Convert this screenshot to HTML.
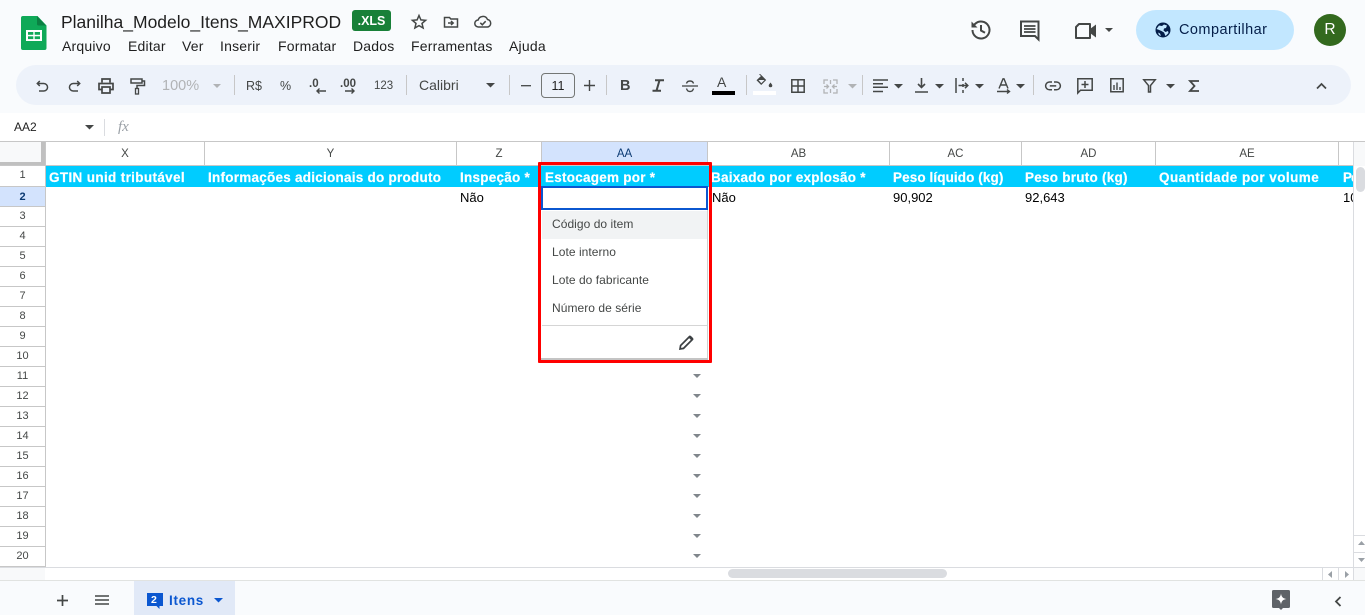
<!DOCTYPE html>
<html lang="pt"><head><meta charset="utf-8"><title>Planilha</title>
<style>
html,body{margin:0;padding:0;width:1365px;height:615px;overflow:hidden;background:#fff;font-family:"Liberation Sans",sans-serif;color:#1f1f1f}
.a{position:absolute}
.t{position:absolute;white-space:nowrap}
svg{position:absolute;overflow:visible}
.m{position:absolute;top:38px;font-size:14px;letter-spacing:.2px;line-height:16px;color:#1f1f1f;white-space:nowrap}
.tb{position:absolute;top:77px;font-size:12px;line-height:16px;color:#444746;white-space:nowrap}
.s{fill:none;stroke:#444746;stroke-width:1.5}
.f{fill:#444746}
.sep{position:absolute;top:75px;width:1px;height:20px;background:#c7c7c7}
.ch{position:absolute;top:142px;height:23px;line-height:25px;font-size:11.5px;text-align:center;color:#444746;border-right:1px solid #c7c7c7;box-sizing:content-box}
.rh{position:absolute;left:0;width:45px;text-align:center;font-size:11px;color:#444746;border-bottom:1px solid #c7c7c7;box-sizing:border-box;line-height:19px;height:20px}
.hd{position:absolute;top:169px;font-size:13.5px;line-height:18px;font-weight:bold;color:#fff;white-space:nowrap;letter-spacing:.25px;-webkit-text-stroke:.2px #fff}
.c{position:absolute;top:190px;font-size:13px;line-height:16px;color:#000;white-space:nowrap}
.o{position:absolute;left:552px;font-size:12px;letter-spacing:.05px;line-height:16px;color:#444746;white-space:nowrap}
.arr{position:absolute;left:693px;width:0;height:0;border-left:4px solid transparent;border-right:4px solid transparent;border-top:4px solid #80868b}
</style></head><body>
<div class="a" style="left:0;top:0;width:1365px;height:141px;background:#f9fbfd"></div>

<!-- logo -->
<svg style="left:21px;top:16px" width="26" height="34" viewBox="0 0 26 34"><path d="M2 0h14.500l9 9.500v22.500a2 2 0 0 1-2 2H2a2 2 0 0 1-2-2V2a2 2 0 0 1 2-2z" fill="#0fa958"/><path d="M16 0l9 9.500h-7.500a1.500 1.500 0 0 1-1.500-1.500z" fill="#0b8043"/><rect x="5" y="14" width="16" height="11" fill="#fff"/><rect x="7" y="16" width="5.300" height="2.800" fill="#0fa958"/><rect x="13.700" y="16" width="5.300" height="2.800" fill="#0fa958"/><rect x="7" y="20.300" width="5.300" height="2.800" fill="#0fa958"/><rect x="13.700" y="20.300" width="5.300" height="2.800" fill="#0fa958"/></svg>

<div class="t" style="left:61px;top:11px;font-size:17.5px;line-height:22px;color:#1f1f1f">Planilha_Modelo_Itens_MAXIPROD</div>
<div class="a" style="left:352px;top:10px;width:39px;height:21px;background:#188038;border-radius:3px;color:#fff;font-size:12.5px;font-weight:bold;line-height:22px;text-align:center">.XLS</div>
<svg style="left:411px;top:14px" width="16" height="16" viewBox="0 0 16 16"><path d="M8 1.500l1.900 4.400 4.700.4-3.600 3.100 1.100 4.600L8 11.600l-4.100 2.400L5 9.400 1.400 6.300l4.700-.4z" class="s" stroke-width="1.400"/></svg>
<svg style="left:443px;top:14px" width="16" height="16" viewBox="0 0 16 16"><path d="M1.500 3.500h5l1.300 1.500h6.700v8h-13z" class="s" stroke-width="1.400"/><path d="M5 9h5M8 7l2.200 2L8 11" class="s" stroke-width="1.300"/></svg>
<svg style="left:474px;top:14px" width="18" height="16" viewBox="0 0 18 16"><path d="M4.500 13a3.500 3.500 0 0 1-.4-7A5 5 0 0 1 13.500 5.500a3.800 3.800 0 0 1 0 7.500z" class="s" stroke-width="1.400"/><path d="M6.300 8.800l2 2 3.400-3.600" class="s" stroke-width="1.300"/></svg>

<div class="m" style="left:62px">Arquivo</div><div class="m" style="left:128px">Editar</div><div class="m" style="left:182px">Ver</div><div class="m" style="left:220px">Inserir</div><div class="m" style="left:278px">Formatar</div><div class="m" style="left:353px">Dados</div><div class="m" style="left:411px">Ferramentas</div><div class="m" style="left:509px">Ajuda</div>

<!-- right top -->
<svg style="left:969px;top:18px" width="24" height="24" viewBox="0 0 24 24"><path d="M3.500 12a8.500 8.500 0 1 0 2.600-6.100L3.500 8.500" fill="none" stroke="#444746" stroke-width="2"/><path d="M2.500 3.500v6h6z" class="f"/><path d="M12 7v5.500l4 2.300" fill="none" stroke="#444746" stroke-width="2"/></svg>
<svg style="left:1019px;top:20px" width="22" height="22" viewBox="0 0 22 22"><path d="M2 1.500h17.500v18l-3.500-3.500H2z" fill="none" stroke="#444746" stroke-width="2"/><path d="M5 6h11.500M5 9h11.500M5 12h11.500" stroke="#444746" stroke-width="1.800"/></svg>
<svg style="left:1074px;top:22px" width="24" height="18" viewBox="0 0 24 18"><path d="M5 2h11v14H2V5z" fill="none" stroke="#444746" stroke-width="2" stroke-linejoin="round"/><path d="M16 7l6-4.500v13L16 11z" class="f"/></svg>
<svg style="left:1104px;top:27px" width="10" height="6" viewBox="0 0 10 6"><path d="M1 1h8L5 5z" class="f"/></svg>
<div class="a" style="left:1136px;top:10px;width:158px;height:40px;border-radius:20px;background:#c2e7ff"></div>
<svg style="left:1155px;top:22px" width="16" height="16" viewBox="0 0 16 16"><circle cx="8" cy="8" r="7.500" fill="#041e49"/><path d="M4 3.500l3 .5 2-1.500 3 1-1 2.500-2 .5-.5 2 2 1.500 2.500-1 .5 2-3 3-1.500-3.500-2.500-1.500L3 7.500 1.500 7zM3 10.500l2 1 1 2.500-2-1z" fill="#c2e7ff"/></svg>
<div class="t" style="left:1179px;top:22px;font-size:14.5px;line-height:16px;color:#041e49;letter-spacing:.45px">Compartilhar</div>
<div class="a" style="left:1314px;top:14px;width:32px;height:32px;border-radius:50%;background:#33691e;color:#fff;font-size:15.5px;line-height:32px;text-align:center">R</div>

<!-- toolbar -->
<div class="a" style="left:16px;top:65px;width:1335px;height:40px;border-radius:20px;background:#edf2fa"></div>
<svg style="left:36px;top:80px" width="13" height="12" viewBox="0 0 13 12"><path d="M1.500 3.500h6.300a3.700 3.700 0 0 1 0 7.500H3M3.800 1L1.300 3.500 3.800 6" class="s"/></svg>
<svg style="left:68px;top:80px" width="13" height="12" viewBox="0 0 13 12"><path d="M11.500 3.500H5.200a3.700 3.700 0 0 0 0 7.500H10M9.200 1l2.500 2.500L9.200 6" class="s"/></svg>
<svg style="left:98px;top:78px" width="16" height="16" viewBox="0 0 16 16"><path d="M4 4.500V1h8v3.500M4 11.500H1V5.500h14v6h-3M4 9h8v6H4z" fill="none" stroke="#444746" stroke-width="1.700"/></svg>
<svg style="left:130px;top:78px" width="16" height="17" viewBox="0 0 16 17"><path d="M1 1h11v4H1zM12 3h2.500v4.500H7v3" fill="none" stroke="#444746" stroke-width="1.500"/><rect x="5.500" y="10.500" width="3" height="5.500" fill="none" stroke="#444746" stroke-width="1.300"/></svg>
<div class="tb" style="left:162px;top:78px;font-size:14.500px;color:#b1b3b5">100%</div>
<svg style="left:213px;top:84px" width="8" height="5"><path d="M0 0h8L4 4z" fill="#b1b3b5"/></svg>
<div class="sep" style="left:234px"></div>
<div class="tb" style="left:246px;top:78px;font-size:12.5px">R$</div>
<div class="tb" style="left:280px;top:78px;font-size:12.5px">%</div>
<div class="tb" style="left:309px;top:76px;font-weight:bold;font-size:11.500px">.0</div>
<svg style="left:315px;top:87px" width="12" height="8"><path d="M11 4H2M4.500 1.500L2 4l2.500 2.500" fill="none" stroke="#444746" stroke-width="1.400"/></svg>
<div class="tb" style="left:340px;top:76px;font-weight:bold;font-size:11.500px">.00</div>
<svg style="left:344px;top:87px" width="12" height="8"><path d="M1 4h9M7.500 1.500L10 4 7.500 6.500" fill="none" stroke="#444746" stroke-width="1.400"/></svg>
<div class="tb" style="left:374px;top:78px;font-size:11.500px">123</div>
<div class="sep" style="left:406px"></div>
<div class="tb" style="left:419px;top:77px;font-size:14px">Calibri</div>
<svg style="left:486px;top:83px" width="9" height="5"><path d="M0 0h9L4.500 4.500z" fill="#444746"/></svg>
<div class="sep" style="left:509px"></div>
<svg style="left:521px;top:85px" width="10" height="2"><path d="M0 .7h10" stroke="#444746" stroke-width="1.300"/></svg>
<div class="a" style="left:541px;top:73px;width:32px;height:23px;border:1px solid #747775;border-radius:4px;text-align:center;font-size:12.500px;line-height:24px;color:#1f1f1f">11</div>
<svg style="left:584px;top:80px" width="12" height="12"><path d="M0 5.500h11M5.500 0v11" stroke="#444746" stroke-width="1.400"/></svg>
<div class="sep" style="left:606px"></div>
<div class="tb" style="left:620px;top:78px;font-size:14.500px;font-weight:bold">B</div>
<svg style="left:652px;top:79px" width="12" height="13"><path d="M3 1.300h9M.5 11.700h8.500M7.500 1.300L4.500 11.700" fill="none" stroke="#444746" stroke-width="2"/></svg>
<svg style="left:682px;top:78px" width="16" height="16"><path d="M0 8h16" stroke="#444746" stroke-width="1.300"/><path d="M4.500 5.500C5 3.500 6.500 3 8 3s3 .5 3.500 2.500M4.500 10.500C5 12.500 6.500 13.500 8 13.500s3-1 3.500-3" fill="none" stroke="#444746" stroke-width="1.400"/></svg>
<div class="tb" style="left:717px;top:74px;font-size:14px">A</div>
<div class="a" style="left:712px;top:91px;width:23px;height:4px;background:#000"></div>
<div class="sep" style="left:746px"></div>
<svg style="left:756px;top:74px" width="18" height="14" viewBox="0 0 18 14"><path d="M3 .5l1.200-.5 6 6-5 5L.5 6.300 5 2" fill="#444746"/><path d="M14.500 8.500c1 1.500 1.800 2 1.800 3a1.800 1.800 0 0 1-3.600 0c0-1 .8-1.500 1.800-3z" fill="#444746"/><path d="M2.500 6h6L5.300 9.300z" fill="#edf2fa"/></svg>
<div class="a" style="left:753px;top:91px;width:23px;height:4px;background:#fff"></div>
<svg style="left:791px;top:79px" width="14" height="14"><path d="M.8.800h12.400v12.400H.8zM7 .8v12.400M.8 7h12.400" fill="none" stroke="#444746" stroke-width="1.500"/></svg>
<svg style="left:823px;top:79px" width="15" height="15"><path d="M1 5V1h4M10 1h4v4M1 10v4h4M10 14h4v-4M7.500 1v4M7.500 10v4M1 7.500h4M14 7.500h-4M3.500 5.500l2 2-2 2M11.500 5.500l-2 2 2 2" fill="none" stroke="#b1b3b5" stroke-width="1.300"/></svg>
<svg style="left:848px;top:84px" width="9" height="5"><path d="M0 0h9L4.500 4.500z" fill="#b1b3b5"/></svg>
<div class="sep" style="left:862px"></div>
<svg style="left:873px;top:79px" width="15" height="14"><path d="M0 1h15M0 4.700h10M0 8.300h15M0 12.500h10" stroke="#444746" stroke-width="1.500"/></svg>
<svg style="left:894px;top:84px" width="9" height="5"><path d="M0 0h9L4.500 4.500z" fill="#444746"/></svg>
<svg style="left:915px;top:78px" width="13" height="15"><path d="M6.500 0v9M3 6l3.500 3.500L10 6M0 14h13" fill="none" stroke="#444746" stroke-width="1.600"/></svg>
<svg style="left:935px;top:84px" width="9" height="5"><path d="M0 0h9L4.500 4.500z" fill="#444746"/></svg>
<svg style="left:955px;top:78px" width="15" height="15"><path d="M1 0v15M8 0v3M8 6v3M8 12v3M3.500 7.500h9M10 4.800l2.800 2.700L10 10.200" fill="none" stroke="#444746" stroke-width="1.500"/></svg>
<svg style="left:975px;top:84px" width="9" height="5"><path d="M0 0h9L4.500 4.500z" fill="#444746"/></svg>
<svg style="left:997px;top:78px" width="14" height="16"><path d="M2 10.500L6 .8h1l4 9.700M3.500 7h6" fill="none" stroke="#444746" stroke-width="1.400"/><path d="M0 13.500h12M10 11.500l2.500 2-2.500 2" fill="none" stroke="#444746" stroke-width="1.400"/></svg>
<svg style="left:1016px;top:84px" width="9" height="5"><path d="M0 0h9L4.500 4.500z" fill="#444746"/></svg>
<div class="sep" style="left:1033px"></div>
<svg style="left:1045px;top:81px" width="16" height="10"><path d="M7 1H4.500a3.800 3.800 0 0 0 0 7.800H7M9 1h2.500a3.800 3.800 0 0 1 0 7.800H9M4.800 4.900h6.400" fill="none" stroke="#444746" stroke-width="1.500"/></svg>
<svg style="left:1077px;top:78px" width="16" height="17"><path d="M.8.800h14.400v11.400H3.500L.8 15z" fill="none" stroke="#444746" stroke-width="1.500"/><path d="M8 3v7M4.500 6.500h7" stroke="#444746" stroke-width="1.500"/></svg>
<svg style="left:1110px;top:78px" width="14" height="15"><path d="M.8.800h12.400v13H.8z" fill="none" stroke="#444746" stroke-width="1.500"/><path d="M4 7v5M7 4.500V12M10 9v3" stroke="#444746" stroke-width="1.400"/></svg>
<svg style="left:1143px;top:79px" width="13" height="14"><path d="M.8.800h11.400L7.500 6.500v6.500h-2V6.500z" fill="none" stroke="#444746" stroke-width="1.500"/></svg>
<svg style="left:1166px;top:84px" width="9" height="5"><path d="M0 0h9L4.500 4.500z" fill="#444746"/></svg>
<svg style="left:1189px;top:80px" width="10" height="12"><path d="M10 1H1l4.500 5L1 11h9" fill="none" stroke="#444746" stroke-width="1.800"/></svg>
<svg style="left:1316px;top:82px" width="11" height="8"><path d="M1 6.500l4.500-4.500 4.500 4.500" fill="none" stroke="#444746" stroke-width="1.700"/></svg>

<!-- formula bar -->
<div class="a" style="left:0;top:113px;width:1365px;height:28px;background:#fff"></div>
<div class="t" style="left:14px;top:119px;font-size:12px;line-height:16px;color:#1f1f1f">AA2</div>
<svg style="left:85px;top:125px" width="9" height="5"><path d="M0 0h9L4.500 4.500z" fill="#444746"/></svg>
<div class="a" style="left:104px;top:119px;width:1px;height:17px;background:#dadce0"></div>
<div class="t" style="left:118px;top:119px;font-family:'Liberation Serif',serif;font-style:italic;font-size:15px;line-height:17px;color:#9aa0a6">fx</div>

<!-- grid headers -->
<div class="a" style="left:0;top:141px;width:1365px;height:1px;background:#c7c7c7"></div>
<div class="a" style="left:0;top:142px;width:41px;height:20px;background:#f8f9fa"></div>
<div class="a" style="left:41px;top:142px;width:4px;height:23px;background:#c0c0c0"></div>
<div class="a" style="left:0;top:162px;width:45px;height:3px;background:#c0c0c0"></div>
<div class="ch" style="left:46px;width:158px">X</div>
<div class="ch" style="left:205px;width:251px">Y</div>
<div class="ch" style="left:457px;width:84px">Z</div>
<div class="ch" style="left:542px;width:165px;background:#d3e3fd;color:#0b3a73;font-weight:normal">AA</div>
<div class="ch" style="left:708px;width:181px">AB</div>
<div class="ch" style="left:890px;width:131px">AC</div>
<div class="ch" style="left:1022px;width:133px">AD</div>
<div class="ch" style="left:1156px;width:182px">AE</div>
<div class="ch" style="left:1339px;width:13px;border-right:none"></div>
<div class="a" style="left:0;top:165px;width:1353px;height:1px;background:#c7c7c7"></div>

<!-- row header -->
<div class="a" style="left:45px;top:142px;width:1px;height:425px;background:#c7c7c7"></div>
<div class="rh" style="top:166px;height:21px;line-height:18px">1</div>
<div class="rh" style="top:187px;background:#d3e3fd;color:#0b3a73;font-weight:bold;line-height:20px">2</div>
<div class="rh" style="top:207px;line-height:19px">3</div>
<div class="rh" style="top:227px;line-height:19px">4</div>
<div class="rh" style="top:247px;line-height:19px">5</div>
<div class="rh" style="top:267px;line-height:19px">6</div>
<div class="rh" style="top:287px;line-height:19px">7</div>
<div class="rh" style="top:307px;line-height:19px">8</div>
<div class="rh" style="top:327px;line-height:19px">9</div>
<div class="rh" style="top:347px;line-height:19px">10</div>
<div class="rh" style="top:367px;line-height:19px">11</div>
<div class="rh" style="top:387px;line-height:19px">12</div>
<div class="rh" style="top:407px;line-height:19px">13</div>
<div class="rh" style="top:427px;line-height:19px">14</div>
<div class="rh" style="top:447px;line-height:19px">15</div>
<div class="rh" style="top:467px;line-height:19px">16</div>
<div class="rh" style="top:487px;line-height:19px">17</div>
<div class="rh" style="top:507px;line-height:19px">18</div>
<div class="rh" style="top:527px;line-height:19px">19</div>
<div class="rh" style="top:547px;line-height:19px">20</div>

<!-- row 1 -->
<div class="a" style="left:46px;top:166px;width:1307px;height:21px;background:#00ccff"></div>
<div class="hd" style="left:49px;letter-spacing:.35px">GTIN unid tributável</div>
<div class="hd" style="left:208px">Informações adicionais do produto</div>
<div class="hd" style="left:460px">Inspeção *</div>
<div class="hd" style="left:545px">Estocagem por *</div>
<div class="hd" style="left:711px">Baixado por explosão *</div>
<div class="hd" style="left:893px;letter-spacing:.1px">Peso líquido (kg)</div>
<div class="hd" style="left:1025px">Peso bruto (kg)</div>
<div class="hd" style="left:1159px;letter-spacing:.45px">Quantidade por volume</div>
<div class="a" style="left:1339px;top:166px;width:14px;height:21px;overflow:hidden"><div class="hd" style="left:4px;top:3px;letter-spacing:-1px">Peso</div></div>

<!-- row 2 -->
<div class="c" style="left:460px">Não</div>
<div class="c" style="left:712px">Não</div>
<div class="c" style="left:893px">90,902</div>
<div class="c" style="left:1025px">92,643</div>
<div class="a" style="left:1339px;top:190px;width:14px;height:16px;overflow:hidden"><div class="c" style="left:4px;top:0">10</div></div>

<!-- dropdown arrows -->
<div class="arr" style="top:374px"></div><div class="arr" style="top:394px"></div><div class="arr" style="top:414px"></div><div class="arr" style="top:434px"></div><div class="arr" style="top:454px"></div><div class="arr" style="top:474px"></div><div class="arr" style="top:494px"></div><div class="arr" style="top:514px"></div><div class="arr" style="top:534px"></div><div class="arr" style="top:554px"></div>

<!-- dropdown -->
<div class="a" style="left:541px;top:210px;width:167px;height:150px;background:#fff;border-right:1px solid #d0d0d0;box-sizing:border-box"></div>
<div class="a" style="left:542px;top:211px;width:165px;height:28px;background:#f1f3f4"></div>
<div class="o" style="top:216px">Código do item</div>
<div class="o" style="top:244px">Lote interno</div>
<div class="o" style="top:272px">Lote do fabricante</div>
<div class="o" style="top:300px">Número de série</div>
<div class="a" style="left:542px;top:325px;width:165px;height:1px;background:#d5d5d5"></div>
<svg style="left:679px;top:335px" width="15" height="15" viewBox="0 0 15 15"><path d="M1 14l.6-3.500L10.500 1.600l2.900 2.900-8.900 8.900z" fill="none" stroke="#3c4043" stroke-width="1.700"/><path d="M9.500 2.500l3 3 2-2-3-3z" fill="#3c4043"/></svg>
<div class="a" style="left:541px;top:358px;width:167px;height:2px;background:#c4c4c4"></div>
<!-- active cell -->
<div class="a" style="left:541px;top:186px;width:167px;height:24px;box-sizing:border-box;border:2px solid #0b57d0;background:#fff"></div>
<!-- red annotation -->
<div class="a" style="left:538px;top:162px;width:174px;height:201px;box-sizing:border-box;border:3px solid #f00;border-radius:1px"></div>

<!-- scrollbars -->
<div class="a" style="left:1353px;top:142px;width:1px;height:438px;background:#dadce0"></div>
<div class="a" style="left:1354px;top:142px;width:11px;height:24px;background:#f8f9fa"></div>
<div class="a" style="left:1356px;top:167px;width:9px;height:25px;background:#dadce0;border-radius:5px"></div>
<div class="a" style="left:1354px;top:535px;width:11px;height:1px;background:#dadce0"></div>
<div class="a" style="left:1354px;top:552px;width:11px;height:1px;background:#dadce0"></div>
<svg style="left:1358px;top:541px" width="7" height="5"><path d="M0 4h7L3.500 0z" fill="#9aa0a6"/></svg>
<svg style="left:1358px;top:558px" width="7" height="5"><path d="M0 0h7L3.500 4z" fill="#9aa0a6"/></svg>
<div class="a" style="left:0;top:567px;width:1365px;height:1px;background:#dadce0"></div>
<div class="a" style="left:0;top:568px;width:45px;height:12px;background:#f8f9fa"></div>
<div class="a" style="left:728px;top:569px;width:219px;height:9px;background:#dadce0;border-radius:5px"></div>
<div class="a" style="left:1322px;top:568px;width:1px;height:12px;background:#dadce0"></div>
<div class="a" style="left:1338px;top:568px;width:1px;height:12px;background:#dadce0"></div>
<div class="a" style="left:1354px;top:568px;width:11px;height:12px;background:#f8f9fa"></div>
<svg style="left:1328px;top:571px" width="5" height="7"><path d="M4 0v7L0 3.500z" fill="#9aa0a6"/></svg>
<svg style="left:1345px;top:571px" width="5" height="7"><path d="M0 0v7l4-3.500z" fill="#9aa0a6"/></svg>

<!-- bottom bar -->
<div class="a" style="left:0;top:580px;width:1365px;height:35px;background:#f9fbfd;border-top:1px solid #e1e3e1;box-sizing:border-box"></div>
<svg style="left:57px;top:595px" width="11" height="11"><path d="M0 5.500h11M5.500 0v11" stroke="#444746" stroke-width="1.700"/></svg>
<svg style="left:95px;top:595px" width="14" height="10"><path d="M0 1h14M0 5h14M0 9h14" stroke="#444746" stroke-width="1.500"/></svg>
<div class="a" style="left:134px;top:581px;width:101px;height:34px;background:#e1e9f7"></div>
<svg style="left:147px;top:593px" width="16" height="16" viewBox="0 0 16 16"><path d="M0 0h16v13h-3.500v3L9.500 13H0z" fill="#0b57d0"/></svg>
<div class="t" style="left:151px;top:593px;font-size:10.500px;font-weight:bold;line-height:14px;color:#fff">2</div>
<div class="t" style="left:169px;top:593px;font-size:13.500px;font-weight:bold;line-height:16px;color:#0b57d0;letter-spacing:.7px">Itens</div>
<svg style="left:214px;top:598px" width="9" height="5"><path d="M0 0h9L4.500 4.500z" fill="#0b57d0"/></svg>
<svg style="left:1272px;top:590px" width="18" height="21" viewBox="0 0 18 21"><path d="M1.500 0h15A1.500 1.500 0 0 1 18 1.500v15a1.500 1.500 0 0 1-1.500 1.500H11l-2 2-2-2H1.500A1.500 1.500 0 0 1 0 16.500v-15A1.500 1.500 0 0 1 1.500 0z" fill="#5f6368"/><path d="M9 3.500c.5 3.500 2 5 5.500 5.500-3.500.5-5 2-5.500 5.500-.5-3.500-2-5-5.500-5.500 3.500-.5 5-2 5.500-5.500z" fill="#fff"/></svg>
<svg style="left:1334px;top:596px" width="8" height="11"><path d="M6.500 1L2 5.500 6.500 10" fill="none" stroke="#444746" stroke-width="1.800"/></svg>
</body></html>
